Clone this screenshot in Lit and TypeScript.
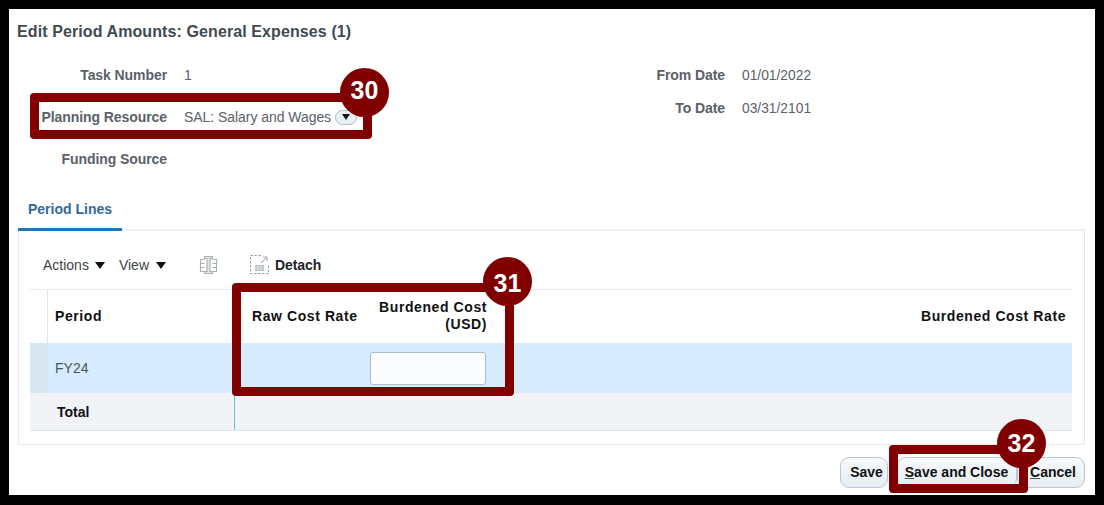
import { LitElement, html, css } from "lit";
import { customElement } from "lit/decorators.js";

@customElement("app-root")
export class AppRoot extends LitElement {
  static styles = css`
    :host { display: block; width: 1104px; height: 505px; box-sizing: border-box; background: #000; padding: 9px; font-family: "Liberation Sans", Arial, sans-serif; color: #333; position: relative; overflow: hidden; }
    .page { width: 1086px; height: 486px; background: #fff; box-sizing: border-box; padding: 14px 10px 0 8px; display: flex; flex-direction: column; }
    h1 { margin: 0; font-size: 16px; line-height: 18px; font-weight: 700; color: #3f4a52; height: 18px; letter-spacing: 0.1px; }
    .form { display: flex; margin-top: 25px; height: 125px; }
    .col { display: grid; grid-template-columns: 149px auto; column-gap: 17px; align-content: start; align-items: start; font-size: 14px; }
    .col.left { grid-auto-rows: 42px; width: 638px; padding-left: 1px; box-sizing: border-box; }
    .col.right { grid-auto-rows: 33px; grid-template-columns: 70px auto; }
    .lab { text-align: right; font-weight: 700; color: #5a6168; line-height: 18px; letter-spacing: -0.08px; }
    .val { color: #5a6168; line-height: 18px; display: flex; align-items: center; gap: 4px; white-space: nowrap; letter-spacing: -0.05px; }
    .right .val { font-size: 13.8px; letter-spacing: 0; padding-top: 1px; }
    .drop { width: 22px; height: 15px; border: 1px solid #aebcc8; border-radius: 8px; background: #e9eff4; display: flex; align-items: center; justify-content: center; box-sizing: border-box; }
    .drop i, .tri { display: inline-block; width: 0; height: 0; border-left: 5.5px solid transparent; border-right: 5.5px solid transparent; border-top: 7px solid #111; }
    .drop i { border-left-width: 4.500px; border-right-width: 4.500px; border-top-width: 6px; }
    .tabs { height: 38px; border-bottom: 2px solid #eef2f6; box-sizing: border-box; margin: 2px 0 0 1px; }
    .tab { width: 104px; height: 38px; box-sizing: border-box; border-bottom: 3px solid #1f75b9; padding: 7px 0 0 10px; font-size: 14px; font-weight: 700; color: #35689b; line-height: 18px; }
    .panel { width: 1067px; height: 214px; margin-left: 1px; box-sizing: border-box; border: 1px solid #e3e9ef; border-top: 0; padding: 0 12px 0 11px; border-radius: 0 0 3px 3px; }
    .bar { height: 59px; display: flex; align-items: center; border-bottom: 1px solid #e6ebf0; box-sizing: border-box; font-size: 14px; color: #3d444a; padding: 9px 0 0 13px; }
    .bar .tri { margin: 1px 0 0 6px; }
    .view { margin-left: 14px; }
    .bar .view + .tri { margin-left: 7px; }
    .ic1 { margin-left: 33px; }
    .ic2 { margin-left: 32px; }
    .detach { margin-left: 6px; font-weight: 700; color: #1f2428; letter-spacing: -0.1px; }
    .hdr, .row { display: grid; grid-template-columns: 18px 186px 123px 130px 1fr; }
    .hdr { height: 53px; font-size: 14px; font-weight: 700; color: #111; align-items: center; letter-spacing: 0.58px; box-sizing: border-box; white-space: nowrap; }
    .hdr > div, .row > div { height: 100%; display: flex; align-items: center; box-sizing: border-box; }
    .hdr > div { padding-bottom: 2px; }
    .first { border-right: 1px solid #dfe6ee; }
    .p { padding-left: 7px; }
    .rc { padding-left: 18px; }
    .bc { justify-content: flex-end; text-align: right; line-height: 17px; }
    .bcr { justify-content: flex-end; padding-right: 6px; }
    .row { height: 50px; background: #d6ebfd; font-size: 14px; color: #4d555c; }
    .row .first { background: #d9e7f3; }
    input { width: 116px; height: 33px; box-sizing: border-box; border: 1px solid #aebcc8; border-radius: 3px; background: #fbfcfe; padding: 0; margin: 1px 1px 0 0; }
    .tot { display: grid; height: 38px; background: #f1f3f7; border-bottom: 1px solid #dfe6ee; box-sizing: border-box; font-size: 14px; font-weight: 700; color: #111; align-items: center; grid-template-columns: 205px 1fr; }
    .tot div:first-child { padding-left: 27px; height: 100%; display: flex; align-items: center; border-right: 1px solid #5fc6e6; box-sizing: border-box; }
    .actions { display: flex; justify-content: flex-end; margin-top: 12px; width: 1068px; }
    button { font: 700 14px "Liberation Sans", Arial, sans-serif; color: #111; height: 31px; border: 1px solid #b9c7d3; border-radius: 9px; background: linear-gradient(#f7f9fb, #e7edf2); padding: 0 0 1px; }
    .s { width: 48px; margin-right: 9px; padding-left: 5px; }
    .sc { width: 120px; padding-right: 1px; }
    .c { width: 68px; padding-left: 4px; }
    u { text-decoration-color: #555; }
    .box { position: absolute; border: 9px solid #800000; border-radius: 4px; box-sizing: border-box; }
    .b30 { left: 30px; top: 93px; width: 342px; height: 46px; }
    .b31 { left: 232px; top: 283px; width: 282px; height: 113px; }
    .b32 { left: 889px; top: 445px; width: 139px; height: 48px; }
    .num { position: absolute; width: 49px; height: 49px; box-sizing: border-box; border-radius: 50%; background: #800000; color: #fff; font-size: 25px; font-weight: 700; display: flex; align-items: center; justify-content: center; }
    .n30 { left: 340px; top: 68px; padding-bottom: 4px; }
    .n31 { left: 483px; top: 257px; padding-top: 4px; }
    .n32 { left: 997px; top: 419px; }
  `;

  render() {
    return html`
      <div class="page">
        <h1>Edit Period Amounts: General Expenses (1)</h1>
        <div class="form">
          <div class="col left">
            <div class="lab">Task Number</div><div class="val">1</div>
            <div class="lab">Planning Resource</div>
            <div class="val">SAL: Salary and Wages <span class="drop"><i></i></span></div>
            <div class="lab">Funding Source</div><div class="val"></div>
          </div>
          <div class="col right">
            <div class="lab">From Date</div><div class="val">01/01/2022</div>
            <div class="lab">To Date</div><div class="val">03/31/2101</div>
          </div>
        </div>
        <div class="tabs"><div class="tab">Period Lines</div></div>
        <div class="panel">
          <div class="bar">
            <span>Actions</span><span class="tri"></span>
            <span class="view">View</span><span class="tri"></span>
            <svg class="ic1" width="19" height="20" viewBox="0 0 19 20" fill="none" stroke="#a9b0b5" stroke-width="1.1">
              <path d="M5.500 1.500h8v2h-2.500v13h2.500v2h-8v-2h2.500v-13h-2.500z" fill="#e4e7e9" />
              <path d="M5.500 4.500h-4v4h4M1.500 8.500v4h4M1.500 12.500v4h4M13.500 4.500h4v4h-4M17.500 8.500v4h-4M17.500 12.500v4h-4" />
            </svg>
            <svg class="ic2" width="19" height="19" viewBox="0 0 19 19" fill="none" stroke="#9aa2a8" stroke-width="1.1">
              <path d="M11 .5H.5v18h18V9" stroke-dasharray="2.500 1.500" />
              <path d="M11 8l5.500-5.500M13 2h4v4" stroke-width="1" />
              <rect x="5" y="10" width="9" height="6" fill="#b5bbc0" stroke="none" />
              <path d="M5 12h9M5 14h9M8 10v6M11 10v6" stroke="#eef0f1" stroke-width=".6" />
            </svg>
            <span class="detach">Detach</span>
          </div>
          <div class="hdr">
            <div class="first"></div>
            <div class="p">Period</div>
            <div class="rc">Raw Cost Rate</div>
            <div class="bc">Burdened Cost<br />(USD)</div>
            <div class="bcr">Burdened Cost Rate</div>
          </div>
          <div class="row">
            <div class="first"></div>
            <div class="p">FY24</div>
            <div></div>
            <div class="bc"><input /></div>
            <div></div>
          </div>
          <div class="tot"><div>Total</div><div></div></div>
        </div>
        <div class="actions">
          <button class="s">Save</button>
          <button class="sc"><u>S</u>ave and Close</button>
          <button class="c"><u>C</u>ancel</button>
        </div>
      </div>
      <div class="box b30"></div>
      <div class="num n30">30</div>
      <div class="box b31"></div>
      <div class="num n31">31</div>
      <div class="box b32"></div>
      <div class="num n32">32</div>
    `;
  }
}
